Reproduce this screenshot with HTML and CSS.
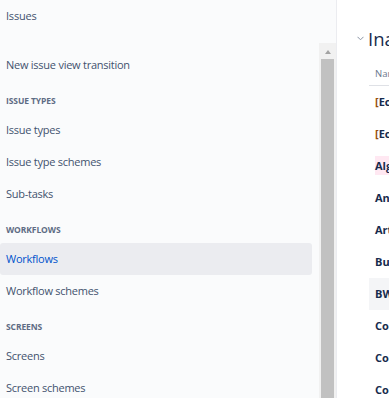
FILE: index.html
```html
<!DOCTYPE html>
<html>
<head>
<meta charset="utf-8">
<link rel="stylesheet" href="styles.css">
</head>
<body>
<div class="page">
  <aside class="sidebar">
    <div class="side-top">Issues</div>
    <div class="side-body">
      <nav class="nav">
        <a class="item">New issue view transition</a>
        <div class="group">Issue types</div>
        <a class="item">Issue types</a>
        <a class="item">Issue type schemes</a>
        <a class="item">Sub-tasks</a>
        <div class="group">Workflows</div>
        <a class="item selected">Workflows</a>
        <a class="item">Workflow schemes</a>
        <div class="group">Screens</div>
        <a class="item">Screens</a>
        <a class="item">Screen schemes</a>
      </nav>
      <div class="scrollbar">
        <div class="arrow"></div>
        <div class="thumb"></div>
      </div>
    </div>
  </aside>
  <main class="main">
    <div class="heading">
      <svg class="chev" width="7" height="5" viewBox="0 0 7 5"><path d="M0.5 0.8 L3.5 3.8 L6.5 0.8" fill="none" stroke="#8993a4" stroke-width="1"/></svg>
      <h2 class="title">Inactive workflows</h2>
    </div>
    <div class="table">
      <div class="th">Name</div>
      <div class="row"><span class="br">[</span>Ecosystem] Workflow</div>
      <div class="row"><span class="br">[</span>Ecosystem] Task workflow</div>
      <div class="row"><span class="pink">Algorithm workflow</span></div>
      <div class="row">Analytics workflow</div>
      <div class="row">Artwork workflow</div>
      <div class="row">Bug workflow</div>
      <div class="row hl">BW workflow</div>
      <div class="row">Content workflow</div>
      <div class="row">Compliance workflow</div>
      <div class="row">Copy workflow</div>
    </div>
  </main>
</div>
</body>
</html>
```
FILE: styles.css
```css
* { box-sizing: border-box; }
html, body { margin: 0; padding: 0; }
body {
  font-family: "Segoe UI", "Open Sans", "Noto Sans", sans-serif;
  font-size: 11px;
  color: #42526e;
  background: #fff;
  overflow: hidden;
}
.page {
  display: flex;
  height: 398px;
  overflow: hidden;
}
.sidebar {
  width: 337px;
  flex: none;
  background: #fafbfc;
  border-right: 1px solid #ebecf0;
  display: flex;
  flex-direction: column;
}
.side-top {
  height: 43px;
  padding: 8px 6px 0;
  line-height: 16px;
  color: #42526e;
  letter-spacing: -0.2px;
}
.side-body {
  flex: 1;
  display: flex;
  min-height: 0;
}
.nav {
  flex: 1;
  padding: 6px 7px 0 0;
  display: flex;
  flex-direction: column;
}
.item {
  display: block;
  height: 32px;
  line-height: 32px;
  padding-left: 6px;
  border-radius: 3px;
  color: #42526e;
  white-space: nowrap;
  flex: none;
  letter-spacing: -0.25px;
}
.item.selected {
  background: #ebecf0;
  color: #0052cc;
}
.group {
  padding: 12px 6px 5px;
  line-height: 16px;
  font-size: 8.5px;
  font-weight: 700;
  text-transform: uppercase;
  color: #5e6c84;
  flex: none;
  letter-spacing: -0.1px;
}
.scrollbar {
  width: 17px;
  flex: none;
  background: #f1f1f1;
  display: flex;
  flex-direction: column;
  align-items: center;
}
.arrow {
  width: 0;
  height: 0;
  margin: 7px 0 5px;
  border-left: 3.5px solid transparent;
  border-right: 3.5px solid transparent;
  border-bottom: 4px solid #a3a3a3;
}
.thumb {
  width: 13px;
  flex: 1;
  background: #c1c1c1;
}
.main {
  flex: 1;
  min-width: 0;
  overflow: hidden;
  padding: 27px 0 0 20px;
}
.heading {
  display: flex;
  align-items: center;
  gap: 4px;
  height: 24px;
  white-space: nowrap;
}
.chev { flex: none; margin-top: -1px; }
.title {
  margin: 0;
  font-size: 18.5px;
  font-weight: 500;
  color: #172b4d;
  line-height: 24px;
}
.table {
  margin-left: 12px;
  width: 500px;
}
.th {
  height: 35px;
  padding: 16px 6px 0;
  line-height: 14px;
  font-size: 9.5px;
  color: #6b778c;
  border-bottom: 1px solid #dfe1e6;
}
.row {
  height: 32px;
  line-height: 32px;
  padding-left: 6px;
  font-weight: 700;
  color: #172b4d;
  white-space: nowrap;
}
.row.hl { background: #f4f5f7; }
.br { color: #974f0c; }
.pink {
  background: #ffe8f2;
  padding: 2px 0;
}
```
